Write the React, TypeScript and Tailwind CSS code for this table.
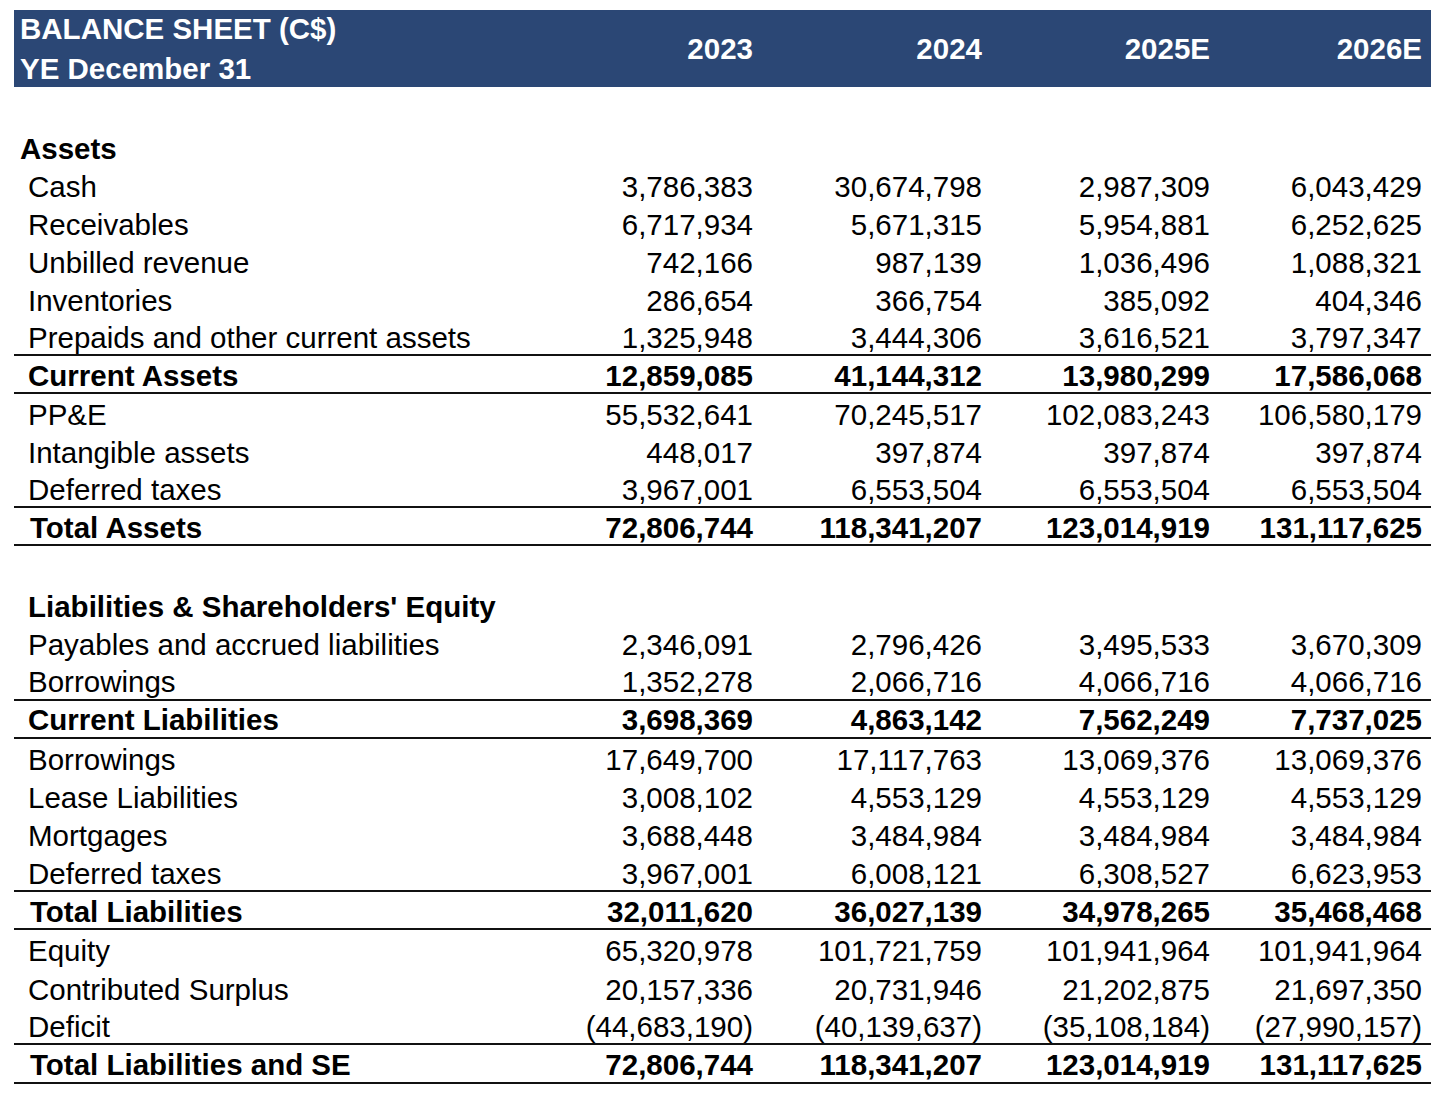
type Row = {
  label: string;
  values: string[];
  bold?: boolean;
  line?: boolean;
  indent?: string;
};

const assets: Row[] = [
  { label: "Cash", values: ["3,786,383", "30,674,798", "2,987,309", "6,043,429"] },
  { label: "Receivables", values: ["6,717,934", "5,671,315", "5,954,881", "6,252,625"] },
  { label: "Unbilled revenue", values: ["742,166", "987,139", "1,036,496", "1,088,321"] },
  { label: "Inventories", values: ["286,654", "366,754", "385,092", "404,346"] },
  { label: "Prepaids and other current assets", values: ["1,325,948", "3,444,306", "3,616,521", "3,797,347"], line: true },
  { label: "Current Assets", values: ["12,859,085", "41,144,312", "13,980,299", "17,586,068"], bold: true, line: true },
  { label: "PP&E", values: ["55,532,641", "70,245,517", "102,083,243", "106,580,179"] },
  { label: "Intangible assets", values: ["448,017", "397,874", "397,874", "397,874"] },
  { label: "Deferred taxes", values: ["3,967,001", "6,553,504", "6,553,504", "6,553,504"], line: true },
  { label: "Total Assets", values: ["72,806,744", "118,341,207", "123,014,919", "131,117,625"], bold: true, line: true, indent: "pl-[16px]" },
];

const liabilities: Row[] = [
  { label: "Payables and accrued liabilities", values: ["2,346,091", "2,796,426", "3,495,533", "3,670,309"] },
  { label: "Borrowings", values: ["1,352,278", "2,066,716", "4,066,716", "4,066,716"], line: true },
  { label: "Current Liabilities", values: ["3,698,369", "4,863,142", "7,562,249", "7,737,025"], bold: true, line: true },
  { label: "Borrowings", values: ["17,649,700", "17,117,763", "13,069,376", "13,069,376"] },
  { label: "Lease Liabilities", values: ["3,008,102", "4,553,129", "4,553,129", "4,553,129"] },
  { label: "Mortgages", values: ["3,688,448", "3,484,984", "3,484,984", "3,484,984"] },
  { label: "Deferred taxes", values: ["3,967,001", "6,008,121", "6,308,527", "6,623,953"], line: true },
  { label: "Total Liabilities", values: ["32,011,620", "36,027,139", "34,978,265", "35,468,468"], bold: true, line: true, indent: "pl-[16px]" },
  { label: "Equity", values: ["65,320,978", "101,721,759", "101,941,964", "101,941,964"] },
  { label: "Contributed Surplus", values: ["20,157,336", "20,731,946", "21,202,875", "21,697,350"] },
  { label: "Deficit", values: ["(44,683,190)", "(40,139,637)", "(35,108,184)", "(27,990,157)"], line: true },
  { label: "Total Liabilities and SE", values: ["72,806,744", "118,341,207", "123,014,919", "131,117,625"], bold: true, line: true, indent: "pl-[16px]" },
];

const grid = "grid grid-cols-[510px_229px_229px_228px_212px] pr-[9px]";

function TableRow({ row, h }: { row: Row; h: string }) {
  return (
    <div
      className={`${grid} ${h} pt-[3px] items-center leading-none ${row.bold ? "font-bold" : ""} ${
        row.line ? "border-b-2 border-[#111]" : ""
      }`}
    >
      <div className={`${row.indent ?? "pl-[14px]"} whitespace-nowrap`}>{row.label}</div>
      {row.values.map((v, i) => (
        <div key={i} className="text-right whitespace-nowrap">
          {v}
        </div>
      ))}
    </div>
  );
}

export default function App() {
  return (
    <div
      className="min-h-screen bg-white pt-[10px] text-[29.5px] text-black"
      style={{ fontFamily: '"Liberation Sans", Arial, sans-serif' }}
    >
      <div className="ml-[14px] w-[1417px]">
        <div className={`${grid} h-[77px] bg-[#2b4775] font-bold text-white items-center leading-none`}>
          <div className="pl-[6px] flex flex-col gap-[10px] whitespace-nowrap">
            <span>BALANCE SHEET (C$)</span>
            <span>YE December 31</span>
          </div>
          <div className="text-right">2023</div>
          <div className="text-right">2024</div>
          <div className="text-right">2025E</div>
          <div className="text-right">2026E</div>
        </div>

        <div className="h-[41px]" />
        <div className="h-[38px] pt-[3px] flex items-center pl-[6px] font-bold leading-none">Assets</div>
        {assets.map((r, i) => (
          <TableRow key={i} row={r} h="h-[38px]" />
        ))}

        <div className="h-[40px]" />
        <div className="h-[38px] pt-[3px] flex items-center pl-[14px] font-bold leading-none">
          Liabilities &amp; Shareholders' Equity
        </div>
        {liabilities.map((r, i) => (
          <TableRow key={i} row={r} h="h-[38.3px]" />
        ))}
      </div>
    </div>
  );
}
